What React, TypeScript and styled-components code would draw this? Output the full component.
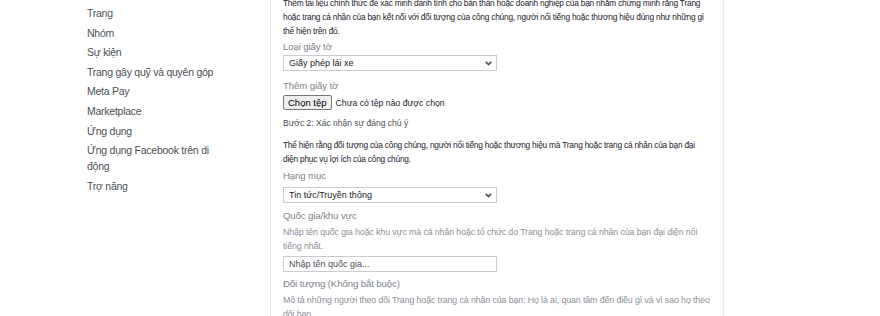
import React from "react";
import styled, { createGlobalStyle } from "styled-components";

const Global = createGlobalStyle`
  html, body { margin: 0; padding: 0; background: #ffffff; }
  body { font-family: "Liberation Sans", Arial, sans-serif; }
  * { box-sizing: border-box; }
`;

const Page = styled.div`
  display: flex;
  align-items: stretch;
  height: 316px;
  overflow: hidden;
  padding-left: 87px;
`;

const Nav = styled.nav`
  width: 140px;
  flex: none;
  padding-top: 5px;
  display: flex;
  flex-direction: column;
  gap: 3.6px;
`;

const NavItem = styled.a`
  display: block;
  font-size: 10.5px;
  letter-spacing: -0.25px;
  line-height: 16px;
  color: #4b4f56;
  text-decoration: none;
  cursor: pointer;
`;

const Panel = styled.section`
  margin-left: 43px;
  width: 454px;
  flex: none;
  border-left: 1px solid #e4e6e9;
  border-right: 1px solid #e4e6e9;
  padding: 0 12px;
  background: #ffffff;
`;

const Content = styled.div`
  margin-top: -4px;
  display: flex;
  flex-direction: column;
`;

const Para = styled.p<{ $muted?: boolean; $mt?: number }>`
  margin: ${(p) => p.$mt ?? 0}px 0 0;
  font-size: ${(p) => (p.$muted ? "8.8px" : "8.3px")};
  letter-spacing: ${(p) => (p.$muted ? "-0.1px" : "-0.2px")};
  line-height: 14px;
  color: ${(p) => (p.$muted ? "#8a8f97" : "#1d2129")};
`;

const Label = styled.div<{ $mt: number }>`
  margin-top: ${(p) => p.$mt}px;
  font-size: 9.6px;
  letter-spacing: -0.1px;
  line-height: 14px;
  color: #7d828a;
`;

const Step = styled.div<{ $mt: number }>`
  margin-top: ${(p) => p.$mt}px;
  font-size: 8.5px;
  line-height: 14px;
  color: #4b4f56;
`;

const SelectBox = styled.div<{ $mt: number }>`
  margin-top: ${(p) => p.$mt}px;
  width: 214px;
  height: 16px;
  border: 1px solid #c8cbd0;
  background: #fff;
  display: flex;
  align-items: center;
  justify-content: space-between;
  padding: 0 4px 0 5px;
  font-size: 9px;
  color: #1d2129;
`;

const Chevron = () => (
  <svg width="7" height="5" viewBox="0 0 7 5" aria-hidden>
    <path d="M0.8 0.9 L3.5 3.6 L6.2 0.9" fill="none" stroke="#4b4f56" strokeWidth="1.6" />
  </svg>
);

const FileRow = styled.div<{ $mt: number }>`
  margin-top: ${(p) => p.$mt}px;
  display: flex;
  align-items: center;
  gap: 4px;
  height: 15px;
`;

const FileButton = styled.button`
  height: 15px;
  padding: 0 4px;
  border: 1px solid #767676;
  border-radius: 2px;
  background: #efefef;
  font-family: "Liberation Sans", Arial, sans-serif;
  font-size: 9.5px;
  color: #000;
  line-height: 13px;
`;

const FileText = styled.span`
  font-size: 8.7px;
  color: #1d2129;
`;

const TextInput = styled.input<{ $mt: number }>`
  margin-top: ${(p) => p.$mt}px;
  width: 214px;
  height: 16px;
  border: 1px solid #c8cbd0;
  padding: 0 5px;
  font-family: "Liberation Sans", Arial, sans-serif;
  font-size: 9px;
  color: #1d2129;
  outline: none;
  &::placeholder { color: #4b4f56; }
`;

const navItems = [
  "Trang",
  "Nhóm",
  "Sự kiện",
  "Trang gây quỹ và quyên góp",
  "Meta Pay",
  "Marketplace",
  "Ứng dụng",
  "Ứng dụng Facebook trên di động",
  "Trợ năng",
];

export default function App() {
  return (
    <>
      <Global />
      <Page>
        <Nav>
          {navItems.map((t) => (
            <NavItem key={t}>{t}</NavItem>
          ))}
        </Nav>
        <Panel>
          <Content>
            <Para>
              Thêm tài liệu chính thức để xác minh danh tính cho bản thân hoặc doanh nghiệp của bạn nhằm chứng minh rằng Trang hoặc trang cá nhân của bạn kết nối với đối tượng của công chúng, người nổi tiếng hoặc thương hiệu đúng như những gì thể hiện trên đó.
            </Para>
            <Label $mt={2}>Loại giấy tờ</Label>
            <SelectBox $mt={1}>
              <span>Giấy phép lái xe</span>
              <Chevron />
            </SelectBox>
            <Label $mt={8}>Thêm giấy tờ</Label>
            <FileRow $mt={2}>
              <FileButton>Chọn tệp</FileButton>
              <FileText>Chưa có tệp nào được chọn</FileText>
            </FileRow>
            <Step $mt={6}>Bước 2: Xác nhận sự đáng chú ý</Step>
            <Para $mt={8}>
              Thể hiện rằng đối tượng của công chúng, người nổi tiếng hoặc thương hiệu mà Trang hoặc trang cá nhân của bạn đại diện phục vụ lợi ích của công chúng.
            </Para>
            <Label $mt={3}>Hạng mục</Label>
            <SelectBox $mt={4}>
              <span>Tin tức/Truyền thông</span>
              <Chevron />
            </SelectBox>
            <Label $mt={6}>Quốc gia/khu vực</Label>
            <Para $muted $mt={2}>
              Nhập tên quốc gia hoặc khu vực mà cá nhân hoặc tổ chức do Trang hoặc trang cá nhân của bạn đại diện nổi tiếng nhất.
            </Para>
            <TextInput $mt={3} placeholder="Nhập tên quốc gia..." />
            <Label $mt={5}>Đối tượng (Không bắt buộc)</Label>
            <Para $muted $mt={2}>
              Mô tả những người theo dõi Trang hoặc trang cá nhân của bạn: Họ là ai, quan tâm đến điều gì và vì sao họ theo dõi bạn.
            </Para>
          </Content>
        </Panel>
      </Page>
    </>
  );
}
